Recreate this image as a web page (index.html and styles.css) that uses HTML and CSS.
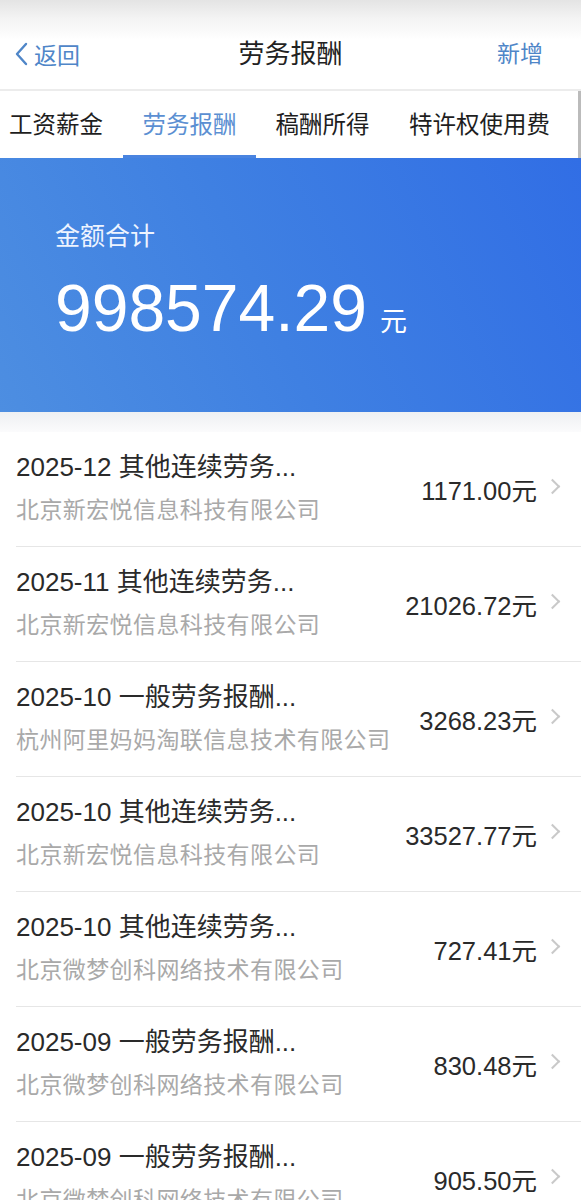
FILE: index.html
```html
<!DOCTYPE html>
<html lang="zh-CN">
<head>
<meta charset="utf-8">
<title>劳务报酬</title>
<link rel="stylesheet" href="styles.css">
</head>
<body>
<div class="page">
  <header class="navbar">
    <div class="nav-back">
      <svg class="back-icon" viewBox="0 0 14 24" width="14" height="24"><path d="M12 2 L3 12 L12 22" fill="none" stroke="#4f86c8" stroke-width="2.4" stroke-linecap="round" stroke-linejoin="round"/></svg>
      <span>返回</span>
    </div>
    <div class="nav-title">劳务报酬</div>
    <div class="nav-action">新增</div>
  </header>

  <nav class="tabs">
    <div class="tab">工资薪金</div>
    <div class="tab active">劳务报酬</div>
    <div class="tab">稿酬所得</div>
    <div class="tab">特许权使用费</div>
  </nav>

  <section class="banner">
    <div class="banner-label">金额合计</div>
    <div class="banner-amount"><span class="big">998574.29</span><span class="unit">元</span></div>
  </section>

  <div class="gap"></div>

  <ul class="list">
    <li class="row">
      <div class="row-main">
        <div class="row-title">2025-12 其他连续劳务...</div>
        <div class="row-sub">北京新宏悦信息科技有限公司</div>
      </div>
      <div class="row-amount">1171.00元</div>
      <span class="chev"></span>
    </li>
    <li class="row">
      <div class="row-main">
        <div class="row-title">2025-11 其他连续劳务...</div>
        <div class="row-sub">北京新宏悦信息科技有限公司</div>
      </div>
      <div class="row-amount">21026.72元</div>
      <span class="chev"></span>
    </li>
    <li class="row">
      <div class="row-main">
        <div class="row-title">2025-10 一般劳务报酬...</div>
        <div class="row-sub">杭州阿里妈妈淘联信息技术有限公司</div>
      </div>
      <div class="row-amount">3268.23元</div>
      <span class="chev"></span>
    </li>
    <li class="row">
      <div class="row-main">
        <div class="row-title">2025-10 其他连续劳务...</div>
        <div class="row-sub">北京新宏悦信息科技有限公司</div>
      </div>
      <div class="row-amount">33527.77元</div>
      <span class="chev"></span>
    </li>
    <li class="row">
      <div class="row-main">
        <div class="row-title">2025-10 其他连续劳务...</div>
        <div class="row-sub">北京微梦创科网络技术有限公司</div>
      </div>
      <div class="row-amount">727.41元</div>
      <span class="chev"></span>
    </li>
    <li class="row">
      <div class="row-main">
        <div class="row-title">2025-09 一般劳务报酬...</div>
        <div class="row-sub">北京微梦创科网络技术有限公司</div>
      </div>
      <div class="row-amount">830.48元</div>
      <span class="chev"></span>
    </li>
    <li class="row">
      <div class="row-main">
        <div class="row-title">2025-09 一般劳务报酬...</div>
        <div class="row-sub">北京微梦创科网络技术有限公司</div>
      </div>
      <div class="row-amount">905.50元</div>
      <span class="chev"></span>
    </li>
  </ul>
</div>
</body>
</html>
```

FILE: styles.css
```css
* { box-sizing: border-box; }
html, body { margin: 0; padding: 0; background: #fff; }
body {
  font-family: "Liberation Sans", "Noto Sans CJK SC", sans-serif;
  color: #222;
  overflow: hidden;
}
.page { width: 581px; height: 1200px; overflow: hidden; }

.navbar {
  height: 91px;
  padding-top: 34px;
  display: flex;
  align-items: flex-start;
  justify-content: space-between;
  position: relative;
  background: linear-gradient(to bottom, #e4e4e4 0px, #f3f3f3 18px, #ffffff 40px, #ffffff 100%);
  border-bottom: 2px solid #ececec;
}
.nav-back {
  display: flex;
  align-items: center;
  gap: 6px;
  padding-left: 14px;
  color: #4f86c8;
  font-size: 23px;
  height: 40px;
}
.back-icon { display: block; }
.nav-title {
  position: absolute;
  left: 0; right: 0; top: 34px;
  text-align: center;
  font-size: 26px;
  line-height: 40px;
  color: #222;
  pointer-events: none;
}
.nav-action {
  padding-right: 38px;
  color: #4f86c8;
  font-size: 23px;
  line-height: 40px;
}

.tabs {
  height: 67px;
  display: flex;
  align-items: stretch;
  border-right: 3px solid #bbb;
  background: #fff;
}
.tab {
  font-size: 23.5px;
  color: #1e1e1e;
  display: flex;
  align-items: center;
  justify-content: center;
  padding-bottom: 3px;
  white-space: nowrap;
}
.tab:nth-child(1) { width: 112px; }
.tab:nth-child(2) { width: 133px; margin-left: 11px; }
.tab:nth-child(3) { width: 133px; }
.tab:nth-child(4) { width: 181px; }
.tab.active {
  color: #5b8fd2;
  border-bottom: 3px solid #4a84e0;
  padding-bottom: 0;
}

.banner {
  height: 254px;
  background: linear-gradient(65deg, #4d8ee1 0%, #3f80e2 45%, #316ee5 100%);
  padding: 60px 0 0 55px;
  color: #fff;
}
.banner-label {
  font-size: 25px;
  line-height: 36px;
  color: #eef4ff;
}
.banner-amount {
  display: flex;
  align-items: baseline;
  margin-top: 14px;
}
.big {
  font-size: 66px;
  line-height: 80px;
}
.unit {
  font-size: 27px;
  margin-left: 13px;
}

.gap {
  height: 20px;
  background: linear-gradient(to bottom, #eef0f3, #fbfbfc);
}

.list { list-style: none; margin: 0; padding: 0 0 0 16px; }
.row {
  display: flex;
  align-items: center;
  height: 115px;
  border-bottom: 1px solid #e6e6e6;
  padding: 18px 19px 19px 0;
}
.row-main { flex: 1; min-width: 0; display: flex; flex-direction: column; gap: 9px; }
.row-title {
  font-size: 26px;
  line-height: 34px;
  color: #2a2a2a;
  white-space: nowrap;
}
.row-sub {
  font-size: 23px;
  line-height: 34px;
  color: #a9a9a9;
  letter-spacing: 0.4px;
  white-space: nowrap;
}
.row-amount {
  font-size: 25.5px;
  color: #2a2a2a;
  white-space: nowrap;
  margin-right: 10px;
}
.chev {
  width: 11px;
  height: 11px;
  border-top: 2px solid #c9c9c9;
  border-right: 2px solid #c9c9c9;
  transform: rotate(45deg);
  margin-right: 4px;
  margin-top: -4px;
}
```
